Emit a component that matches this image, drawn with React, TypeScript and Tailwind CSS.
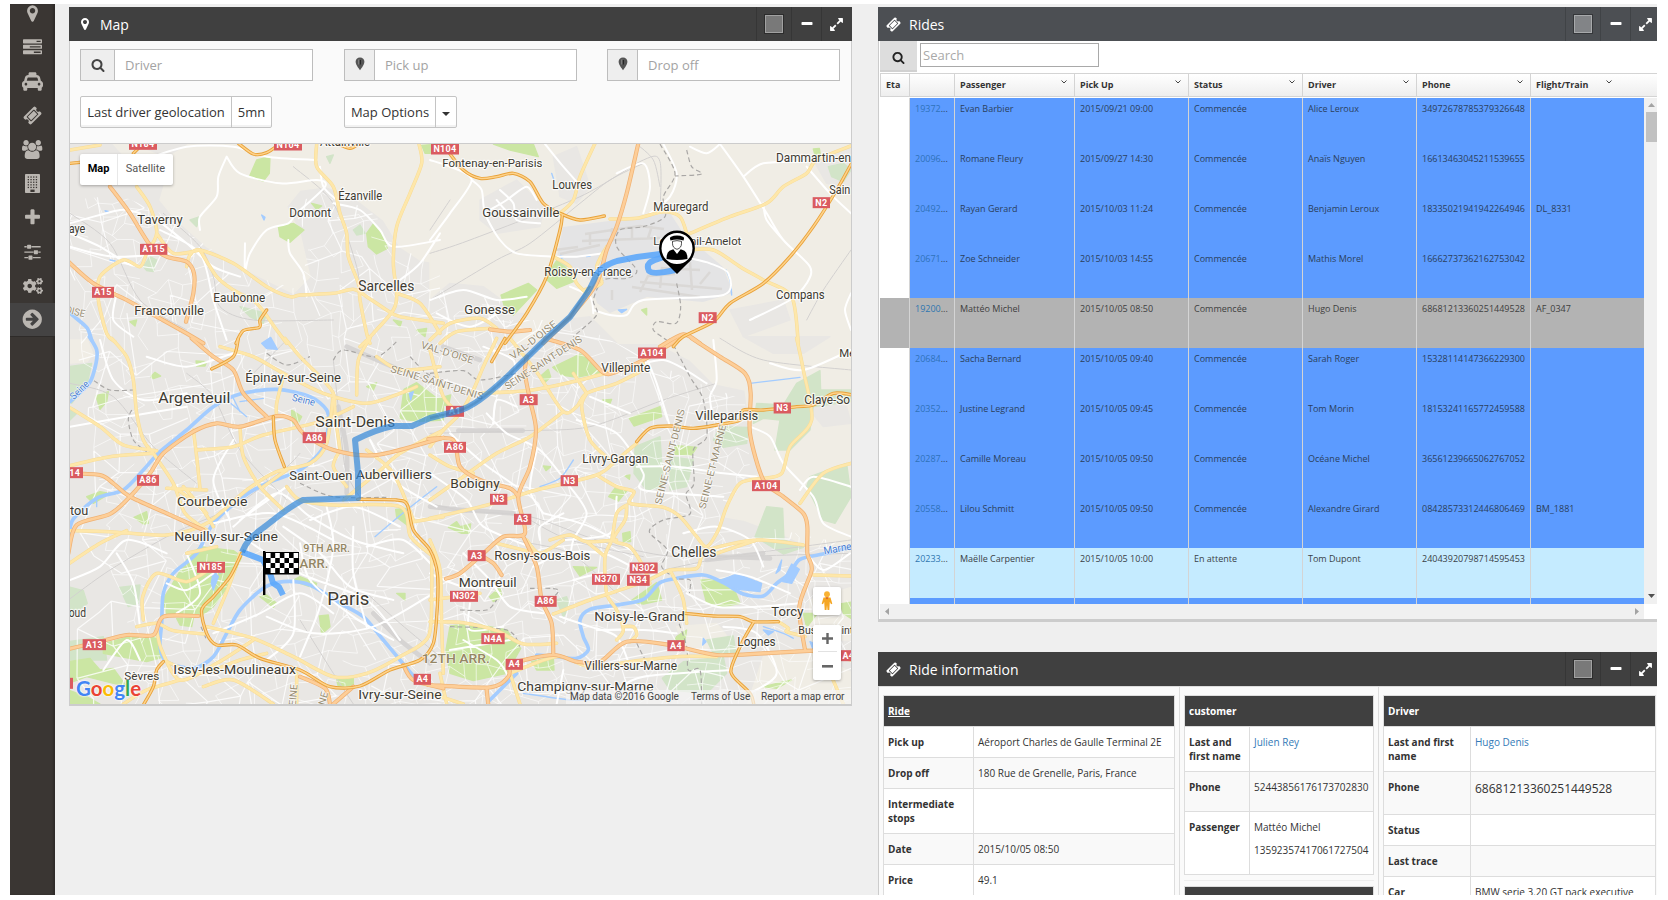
import React from "react";
import { FaTaxi, FaCogs } from "react-icons/fa";

/* ---------- icons ---------- */

const P = {
  marker:
    "M1152 640q0-106-75-181t-181-75-181 75-75 181 75 181 181 75 181-75 75-181zm256 0q0 109-33 179l-364 774q-16 33-47.5 52t-67.5 19-67.5-19-46.5-52l-365-774q-33-70-33-179 0-212 150-362t362-150 362 150 150 362z",
  search:
    "M1216 832q0-185-131.5-316.5t-316.5-131.5-316.5 131.5-131.5 316.5 131.5 316.5 316.5 131.5 316.5-131.5 131.5-316.5zm512 832q0 52-38 90t-90 38q-54 0-90-38l-343-342q-179 124-399 124-143 0-273.5-55.5t-225-150-150-225-55.5-273.5 55.5-273.5 150-225 225-150 273.5-55.5 273.5 55.5 225 150 150 225 55.5 273.5q0 220-124 399l343 343q37 37 37 90z",
  plus: "M1600 736v192q0 40-28 68t-68 28h-416v416q0 40-28 68t-68 28h-192q-40 0-68-28t-28-68v-416h-416q-40 0-68-28t-28-68v-192q0-40 28-68t68-28h416v-416q0-40 28-68t68-28h192q40 0 68 28t28 68v416h416q40 0 68 28t28 68z",
  minus: "M1600 736v192q0 40-28 68t-68 28h-1216q-40 0-68-28t-28-68v-192q0-40 28-68t68-28h1216q40 0 68 28t28 68z",
  ticket:
    "M1024 452l316 316-572 572-316-316zm-211 979l618-618q19-19 19-45t-19-45l-362-362q-18-18-45-18t-45 18l-618 618q-19 19-19 45t19 45l362 362q18 18 45 18t45-18zm889-637l-907 908q-37 37-90.5 37t-90.5-37l-126-126q56-56 56-136t-56-136-136-56-136 56l-125-126q-37-37-37-90.5t37-90.5l907-906q37-37 90.5-37t90.5 37l125 125q-56 56-56 136t56 136 136 56 136-56l126 125q37 37 37 90.5t-37 90.5z",
  arrow:
    "M1413 896q0-27-18-45l-91-91-362-362q-18-18-45-18t-45 18l-91 91q-18 18-18 45t18 45l189 189h-502q-26 0-45 19t-19 45v128q0 26 19 45t45 19h502l-189 189q-19 19-19 45t19 45l91 91q18 18 45 18t45-18l362-362 91-91q18-18 18-45zm251 0q0 209-103 385.5t-279.5 279.5-385.5 103-385.5-103-279.5-279.5-103-385.5 103-385.5 279.5-279.5 385.5-103 385.5 103 279.5 279.5 103 385.5z",
  tasks:
    "M1024 1408h640v-128h-640v128zm-384-512h1024v-128h-1024v128zm640-512h384v-128h-384v128zm512 832v256q0 26-19 45t-45 19h-1664q-26 0-45-19t-19-45v-256q0-26 19-45t45-19h1664q26 0 45 19t19 45zm0-512v256q0 26-19 45t-45 19h-1664q-26 0-45-19t-19-45v-256q0-26 19-45t45-19h1664q26 0 45 19t19 45zm0-512v256q0 26-19 45t-45 19h-1664q-26 0-45-19t-19-45v-256q0-26 19-45t45-19h1664q26 0 45 19t19 45z",
  sliders:
    "M480 1408v128h-352v-128h352zm352-128q26 0 45 19t19 45v256q0 26-19 45t-45 19h-256q-26 0-45-19t-19-45v-256q0-26 19-45t45-19h256zm160-384v128h-864v-128h864zm-640-512v128h-224v-128h224zm1312 1024v128h-736v-128h736zm-960-1152q26 0 45 19t19 45v256q0 26-19 45t-45 19h-256q-26 0-45-19t-19-45v-256q0-26 19-45t45-19h256zm640 512q26 0 45 19t19 45v256q0 26-19 45t-45 19h-256q-26 0-45-19t-19-45v-256q0-26 19-45t45-19h256zm320 128v128h-224v-128h224zm0-512v128h-864v-128h864z",
  expand:
    "M883 1056q0 13-10 23l-332 332 144 144q19 19 19 45t-19 45-45 19h-448q-26 0-45-19t-19-45v-448q0-26 19-45t45-19 45 19l144 144 332-332q10-10 23-10t23 10l114 114q10 10 10 23zm781-864v448q0 26-19 45t-45 19-45-19l-144-144-332 332q-10 10-23 10t-23-10l-114-114q-10-10-10-23t10-23l332-332-144-144q-19-19-19-45t19-45 45-19h448q26 0 45 19t19 45z",
  users:
    "M593 896q-162 5-265 128h-134q-82 0-138-40.5t-56-118.5q0-353 124-353 6 0 43.5 21t97.5 42.5 119 21.5q67 0 133-23-5 37-5 66 0 139 81 256zm1071 637q0 120-73 189.5t-194 69.5h-874q-121 0-194-69.5t-73-189.5q0-53 3.5-103.5t14-109 26.5-108.5 43-97.5 62-81 85.5-53.5 111.5-20q10 0 43 21.5t73 48 107 48 135 21.5 135-21.5 107-48 73-48 43-21.5q61 0 111.5 20t85.5 53.5 62 81 43 97.5 26.5 108.5 14 109 3.5 103.5zm-1024-1277q0 106-75 181t-181 75-181-75-75-181 75-181 181-75 181 75 75 181zm704 384q0 159-112.5 271.5t-271.5 112.5-271.5-112.5-112.5-271.5 112.5-271.5 271.5-112.5 271.5 112.5 112.5 271.5zm576 225q0 78-56 118.5t-138 40.5h-134q-103-123-265-128 81-117 81-256 0-29-5-66 66 23 133 23 59 0 119-21.5t97.5-42.5 43.5-21q124 0 124 353zm-128-609q0 106-75 181t-181 75-181-75-75-181 75-181 181-75 181 75 75 181z",
};

function Icon({ d, size, w = 1792, className = "" }: { d: string; size: number; w?: number; className?: string }) {
  return (
    <svg viewBox={`0 0 ${w} 1792`} height={size} width={(size * w) / 1792} fill="currentColor" className={"shrink-0 " + className}>
      <path d={d} />
    </svg>
  );
}

function Building() {
  const windows: React.ReactNode[] = [];
  for (let r = 0; r < 5; r++)
    for (let c = 0; c < 4; c++)
      windows.push(<rect key={`${r}-${c}`} x={2.7 + c * 2.7} y={2.4 + r * 2.6} width={1.3} height={1.3} fill="#3a3633" />);
  return (
    <svg width="15" height="19" viewBox="0 0 15 19">
      <rect width="15" height="19" rx="0.8" fill="#bab6b1" />
      {windows}
      <rect x="5.400" y="15.6" width="4.200" height="2.4" fill="#3a3633" />
    </svg>
  );
}

const SIDE: React.ReactNode[] = [
  <Icon d={P.marker} size={19} />,
  <Icon d={P.tasks} size={19} />,
  <FaTaxi size={21} />,
  <Icon d={P.ticket} size={19} />,
  <Icon d={P.users} size={19} w={1920} />,
  <Building />,
  <Icon d={P.plus} size={19} />,
  <Icon d={P.sliders} size={19} />,
  <FaCogs size={20} />,
  <Icon d={P.arrow} size={22.5} />,
];

function Sidebar() {
  return (
    <nav className="flex w-[45px] shrink-0 flex-col overflow-hidden bg-[#3a3633] text-[#bab6b1] shadow-[inset_-2px_0_2px_rgba(0,0,0,0.2)]">
      <div className="-mt-[8px] flex flex-col">
        {SIDE.map((icon, i) => (
          <div
            key={i}
            className={
              i === 9
                ? "flex h-[34px] items-center justify-center border-b border-[#2e2b29] bg-[#444343]"
                : "flex h-[34.1px] items-center justify-center"
            }
          >
            {icon}
          </div>
        ))}
      </div>
    </nav>
  );
}

/* ---------- panels ---------- */

function PanelHeader({ title, icon, tone = "bg-[#404040]" }: { title: string; icon: React.ReactNode; tone?: string }) {
  return (
    <header className={"flex h-[34px] shrink-0 items-center text-white " + tone}>
      <div className="flex w-[31px] items-center justify-center">{icon}</div>
      <h2 className="flex-1 text-[14px]">{title}</h2>
      <div className="flex h-full w-[35px] items-center justify-center border-l border-black/15">
        <span className="-mt-px h-[18px] w-[18px] border border-white/30 bg-white/30 outline outline-black/30" />
      </div>
      <div className="flex h-full w-[30px] items-center justify-center border-l border-black/15">
        <Icon d={P.minus} size={14} />
      </div>
      <div className="flex h-full w-[31px] items-center justify-center border-l border-black/15 pr-[2px]">
        <Icon d={P.expand} size={15} />
      </div>
    </header>
  );
}

function PinGlyph() {
  return (
    <svg width="10" height="14" viewBox="0 0 10 14" className="-mt-[3px]">
      <path d="M5 0.5C2.4 0.5.6 2.4.6 4.8.6 8 5 13.2 5 13.2S9.4 8 9.4 4.8C9.4 2.4 7.6.5 5 .5z" fill="#555" />
      <path d="M4.3 3h1.6v4.6H4.3z" fill="#222" />
      <path d="M3.9 2.500v5" stroke="#aaa" strokeWidth=".8" />
    </svg>
  );
}

function Field({ icon, label, cell }: { icon: React.ReactNode; label: string; cell: string }) {
  return (
    <div className="flex h-8 w-[233px] border border-[#bdbdbd] bg-white">
      <div className={"flex items-center justify-center border-r border-[#bdbdbd] bg-[#eeeeee] " + cell}>{icon}</div>
      <span className="pl-[10px] text-[13px] leading-[30px] text-[#a3a3a3]">{label}</span>
    </div>
  );
}

/* ---------- map ---------- */

type Label = [text: string, x0: number, x1: number, base: number, size: number, tone?: string, rot?: number];
type Shield = [text: string, cx: number, cy: number, w: number];
interface Tile {
  dx: number;
  dy: number;
  rural: string[];
  town: string[];
  wood: string[];
  park: string[];
  water: string[];
  river: string[];
  stream: string[];
  rail: string[];
  yard: string[];
  border: string[];
  white: string[];
  yellow: string[];
  mway: string[];
  trunk: string[];
  labels: Label[];
  shields: Shield[];
}

const TILES: Tile[] = [
  {
    dx: 0,
    dy: 0,
    rural: ["340,432 1320,432 1320,790 1260,780 1200,740 1150,660 1060,590 980,560 900,570 860,620 900,700 930,830 880,880 760,820 620,740 520,650 480,600 500,530 420,520"],
    town: ["400,432 560,432 500,470"],
    wood: ["430,800 450,770 470,780 460,815 440,812", "1060,690 1080,675 1095,700 1070,705", "720,920 800,940 790,970 750,950", "980,470 1000,465 990,490", "570,660 600,650 590,680"],
    park: [
      "770,480 810,470 808,520 790,543 748,530",
      "835,680 880,670 912,690 870,727 840,710",
      "1100,700 1120,672 1150,705 1162,745 1130,762 1105,740",
      "1265,436 1320,432 1300,460 1275,460",
      "935,610 965,618 950,628",
      "390,965 410,960 405,978",
      "1180,960 1205,965 1200,980",
      "1250,990 1280,985 1275,1010",
    ],
    water: ["785,645 795,652 792,660", "315,632 325,634 320,638"],
    river: ["205,935 235,960 262,985 275,1020"],
    stream: ["330,780 345,783", "560,798 570,800"],
    rail: ["490,640 600,740 640,830 660,920 760,960 1000,960", "210,640 330,730 420,900 560,990", "880,500 1000,610 1070,800 1080,900"],
    yard: [],
    border: [],
    white: [
      "430,480 560,440 700,440 800,470 950,480",
      "210,670 360,630 420,640",
      "680,470 720,520 840,550 950,540 975,560 890,640 865,670 800,690 750,760 735,810 735,730",
      "865,720 870,760 910,820 920,890",
      "1000,610 1080,630 1140,690 1180,740 1320,720",
      "210,700 300,740 380,790 420,800",
      "210,740 340,770 520,760",
      "460,650 560,730 640,800 720,830",
      "480,690 600,760 640,900 680,1020",
      "1320,700 1260,790 1200,840",
      "600,690 600,650 650,590 655,530 680,470",
      "960,500 970,560 1010,600",
      "350,880 340,960 400,1010",
    ],
    yellow: [
      "410,560 450,620 470,700 440,760 420,800 370,780 300,830 295,900 320,1000 345,1025",
      "950,432 950,500 1000,560 1020,640 1040,700 1045,770 1075,850 1080,900 1100,1000 1110,1030",
      "1257,432 1265,490 1230,580 1190,680 1180,790 1190,880 1180,930 1120,1000 1080,1040",
      "560,800 570,765 600,750 700,790 800,860 870,890 900,885 1000,880 1060,868 1100,890 1160,930 1200,950 1330,970",
      "600,750 650,830 700,870 770,910 830,990 860,1030",
      "470,700 520,760 600,750",
      "1190,880 1260,910 1320,1000",
      "210,450 300,435",
    ],
    mway: ["205,785 280,850 380,900 470,950 560,1000 610,1030", "330,560 390,640 450,735 500,770 560,785 582,820 580,880 558,965"],
    trunk: ["210,490 240,487", "715,430 760,462 800,458 842,430", "400,460 430,430", "1010,430 1050,445 1080,430", "708,1030 730,992 778,982 780,960 800,930"],
    labels: [
      ["Taverny", 412, 548, 671, 38],
      ["aye", 206, 256, 700, 36],
      ["Franconville", 403, 612, 946, 37],
      ["Eaubonne", 640, 796, 906, 36],
      ["Sarcelles", 1075, 1243, 873, 42],
      ["Domont", 868, 993, 651, 36],
      ["Ézanville", 1015, 1147, 600, 36],
      ["Attainville", 960, 1110, 437, 36],
      ["OISE", 196, 256, 945, 30, "#9a8f76", 14],
    ],
    shields: [
      ["N184", 429, 433, 84],
      ["N104", 864, 435, 84],
      ["A115", 461, 748, 82],
      ["A15", 309, 877, 66],
    ],
  },
  {
    dx: 430,
    dy: 0,
    rural: ["0,430 1270,430 1270,1030 0,1030"],
    town: [
      "150,600 260,540 340,620 330,680 200,700 150,660",
      "0,900 60,850 160,860 215,900 225,940 290,940 240,1030 0,1030",
      "370,470 440,440 480,560 440,610 390,590",
      "1150,480 1263,440 1263,560 1190,550",
      "320,1030 400,960 480,950 560,1030",
      "900,930 1060,900 1080,960 940,1010",
    ],
    wood: ["1195,500 1240,490 1263,510 1240,545 1205,530", "380,785 400,780 410,800"],
    park: ["190,432 310,432 325,470 240,450", "345,835 380,782 415,810 430,845 380,865", "213,885 295,850 320,870 250,945 225,925", "1150,447 1168,445 1172,470 1155,465", "635,930 650,925 650,945"],
    water: ["390,768 400,770 395,775", "565,930 590,928 575,938"],
    river: [],
    stream: ["888,810 900,840 905,885", "365,520 372,540", "470,770 480,768"],
    rail: ["640,490 540,540 450,610 300,730 200,780 0,900", "0,760 120,720 450,590 640,480 690,485 690,640", "1263,750 1180,870 1130,960", "620,432 670,480 690,560", "0,690 60,600"],
    yard: [],
    border: ["690,432 735,520 700,590 705,650 640,680 570,690 560,740 620,810 590,835 520,840 490,900 500,945 430,1010", "770,450 785,500 815,522 735,528", "740,850 752,920 738,970 680,965 670,990 710,1020"],
    white: [
      "0,480 60,500 125,540 60,640 0,720",
      "125,540 155,570 165,640 210,720 260,760 370,770",
      "345,432 400,500 440,545",
      "700,432 740,520 720,590 660,640",
      "780,440 830,460 870,432",
      "870,432 940,530 1010,640 1060,720 1140,800 1130,850 1080,900 960,960",
      "940,530 1000,490 1130,485",
      "1130,500 1200,580 1263,640",
      "380,770 440,770 520,760",
      "490,930 540,945 590,945 640,900 880,885 895,820 840,790 780,775",
      "560,520 640,490 660,560 640,640",
      "0,900 100,870 200,900 290,890",
      "20,940 120,980 220,930",
      "420,860 480,890 490,940",
      "1000,610 1010,660 1060,720",
      "1263,880 1245,930 1263,990",
      "200,600 240,640 300,630",
      "210,570 250,610 260,660 330,670",
      "180,630 230,600 290,560 320,600",
    ],
    yellow: [
      "495,430 450,530 430,600 390,640",
      "540,657 620,655 700,635 750,650 770,700",
      "780,700 900,650 1010,610 1060,560 1130,520 1160,480 1270,435",
      "770,750 850,750 930,800 1000,840 1085,890 1105,1030",
      "370,770 420,800 440,850 475,885",
      "530,740 500,800 515,850 460,870",
      "0,1020 60,970 150,955 200,985",
      "30,1030 80,995 180,985",
    ],
    mway: ["625,430 590,580 560,680 530,750 500,850 430,940 340,1030", "180,988 240,995 300,990", "690,1040 760,1003 810,1030"],
    trunk: [
      "55,455 100,510 150,535 200,530 250,520 300,545 340,610 390,640 450,660 523,648",
      "397,645 390,690 350,830 290,940 225,1030",
      "1270,480 1220,570 1150,680 1080,770 1000,850 900,910 850,965 760,1010 730,1040",
    ],
    labels: [
      ["Fontenay-en-Parisis", 37, 337, 500, 35],
      ["Louvres", 367, 486, 566, 36],
      ["Goussainville", 157, 388, 651, 39],
      ["Mauregard", 670, 835, 633, 36],
      ["Le Mesnil-Amelot", 670, 934, 735, 35],
      ["Roissy-en-France", 343, 604, 828, 36],
      ["Gonesse", 103, 255, 942, 39],
      ["Compans", 1038, 1184, 896, 36],
      ["Dammartin-en", 1038, 1263, 486, 36],
      ["Sain", 1198, 1261, 581, 36],
    ],
    shields: [
      ["N104", 45, 447, 84],
      ["N2", 1174, 608, 52],
      ["N2", 833, 953, 54],
    ],
  },
  {
    dx: 0,
    dy: 340,
    rural: ["205,0 262,0 278,40 262,65 205,70"],
    town: [],
    wood: ["205,80 275,70 262,130 215,190", "205,740 250,752 262,790 205,830", "358,742 420,735 415,790 385,800", "205,905 310,890 320,960 205,960", "205,210 235,215 210,240"],
    park: [
      "600,620 700,632 725,650 690,730 640,800 600,830 500,822 488,780 560,660",
      "310,912 380,892 470,890 495,950 440,965 310,940",
      "205,965 270,955 300,990 340,985 380,1040 260,1010 205,1030",
      "1212,148 1250,128 1330,190 1330,240 1250,245 1200,235",
      "958,828 985,825 990,860 965,882",
      "1187,508 1218,505 1228,560 1190,532",
      "288,168 325,155 320,185 300,208",
      "588,63 620,65 615,78 590,78",
      "402,532 440,515 445,550 430,552",
      "452,110 465,97 482,108 460,116",
      "880,720 900,710 950,730 945,745 900,730",
      "780,770 800,765 830,790 820,802",
      "1100,140 1130,128 1120,150",
      "875,210 905,230 890,258 875,245",
      "530,835 580,835 575,860 540,855",
      "260,470 300,455 330,460 280,490",
      "1010,1020 1060,1015 1060,1035 1015,1040",
      "1190,760 1215,760 1215,780",
      "205,1050 260,1070 300,1092 205,1092",
    ],
    water: ["785,10 812,-8 832,28 800,26", "640,690 655,710 640,750 634,730", "1228,160 1240,155 1232,180"],
    river: [
      "268,-10 290,30 288,70 268,130 210,185",
      "208,600 218,540 290,475 370,450 430,390 480,335 560,270 640,200 720,162 830,148 930,170 980,210 985,260 965,330 900,390 800,430 730,470 640,550 590,640 520,700 490,760 485,850 480,920 500,965 580,985 640,950 680,880 720,810 790,745 850,725 930,735 1020,790 1090,830 1150,900 1200,960 1250,1020",
    ],
    stream: ["680,180 740,230", "700,175 720,215", "720,185 790,175", "1125,590 1220,510 1310,440", "640,680 660,700", "290,480 290,500"],
    rail: ["1000,60 1020,250 1040,400 1100,500", "205,780 330,690 520,580 700,500 850,390 900,340", "210,130 340,170 460,320 590,430", "760,100 860,0", "1100,760 1200,850 1320,950", "560,100 640,170 720,330 860,480", "900,840 1000,1000 1060,1092"],
    yard: ["1015,200 1040,330 1040,460", "1120,820 1200,900 1290,970", "1040,20 1200,90"],
    border: ["282,122 330,150 400,150", "395,210 385,240 400,300 440,335", "1000,60 1030,30 1130,50 1195,0", "800,40 860,75 930,50", "1230,50 1280,100 1330,120", "603,860 620,900", "900,430 1000,470 1160,472"],
    white: [
      "440,50 560,80 700,40",
      "300,0 340,120 430,180 560,160",
      "210,260 380,230 560,200",
      "640,550 820,520 1000,600",
      "740,600 900,700 1100,780 1200,900",
      "850,560 960,640 1050,740 1180,780",
      "980,500 1000,620 960,800 900,950",
      "720,540 860,440",
      "700,560 830,460 930,530 1060,600 1210,640",
      "800,830 940,880 1120,860 1300,760",
      "880,720 880,880 800,960",
      "1060,560 1060,700 1100,860",
      "640,880 780,820 900,760 1000,820",
      "210,720 300,680 380,600 500,640",
      "350,640 400,730 420,860",
      "560,640 600,760 530,820",
      "1110,300 1180,420 1310,500",
      "930,540 1060,500 1200,560",
      "1100,620 1210,600 1310,690",
      "700,300 640,420 690,540",
      "900,610 930,720 1060,830 1180,900",
      "500,730 560,750 640,700",
      "310,990 380,900 420,960",
    ],
    yellow: [
      "335,-5 380,50 400,120 410,220 430,300 460,340",
      "205,200 300,260 370,315 470,332",
      "205,378 330,350 460,340",
      "460,340 520,430 555,520 620,570",
      "660,20 760,50 850,100 970,160 1100,190 1200,160 1250,140",
      "850,110 830,190 830,230",
      "855,-5 900,50 960,110 1000,160 1005,220 1020,330",
      "1110,-5 1075,60 1070,165",
      "720,260 730,350 780,440 850,510",
      "580,270 590,350 600,445",
      "590,330 700,320 790,285 960,245 1060,200",
      "205,572 330,575 500,585 620,550 740,450 830,395 930,370 980,310 1000,160",
      "500,445 620,450",
      "205,672 300,610 380,572",
      "430,840 428,770 470,700 560,725 640,680",
      "410,860 470,850 520,872 612,882",
      "470,870 485,930 540,1020 650,970 760,900",
      "500,965 600,1000 720,960 800,940",
      "860,440 900,480 1000,495 1200,500 1232,590 1300,650",
      "1330,270 1200,340 1130,400 1030,480",
      "1020,330 1000,380 1040,440",
      "620,860 760,895 880,950 1000,1010 1100,1000 1200,950 1285,890 1295,760 1295,650",
      "720,640 690,730 640,850",
      "1100,330 1180,400 1240,540",
      "1330,530 1240,545",
      "610,1040 700,1020 820,1092",
      "650,620 560,640",
      "520,440 600,500 640,560",
      "550,440 620,520",
      "860,390 790,440",
      "370,1092 440,1050 540,1020",
      "890,1000 890,1092",
      "1130,50 1200,90 1320,80",
    ],
    mway: [
      "575,-5 640,50 700,90 730,160 800,230",
      "205,640 230,555 330,522 390,470 450,400 490,340 580,275 650,250 720,260 830,228 880,240 910,280 1000,330 1130,345 1330,293",
      "205,400 300,405 340,430 390,470 500,520 610,570",
      "205,927 300,905 380,885 460,885 490,830 595,828",
      "1210,975 1240,1020 1330,1045",
      "1060,1040 1000,1092",
      "990,1092 975,1045 900,1010",
    ],
    trunk: [
      "725,640 690,710 640,770 605,810 620,880 650,915 710,915 780,955 900,990 990,1040 1080,1038 1170,990 1260,960 1300,910 1312,800 1312,700 1290,630 1240,570 1222,495 1190,480 1073,478",
      "635,87 700,50 715,-5",
      "820,230 825,300 853,380",
      "430,1095 460,1040 470,990 490,965",
    ],
    labels: [
      ["Argenteuil", 475, 691, 188, 44],
      ["Épinay-sur-Seine", 736, 1023, 126, 37],
      ["Saint-Denis", 946, 1186, 262, 44],
      ["Saint-Ouen", 868, 1057, 420, 37],
      ["Aubervilliers", 1067, 1296, 418, 39],
      ["Courbevoie", 531, 742, 497, 39],
      ["Neuilly-sur-Seine", 523, 834, 602, 39],
      ["tou", 210, 265, 524, 37],
      ["9TH ARR.", 910, 1050, 636, 33, "#948664"],
      ["8TH ARR.", 815, 985, 684, 36, "#948664"],
      ["Paris", 982, 1108, 794, 56],
      ["Sèvres", 373, 478, 1020, 35],
      ["Issy-les-Moulineaux", 520, 888, 1001, 39],
      ["oud", 206, 258, 832, 37],
      ["Ivry-sur-Seine", 1075, 1325, 1077, 39],
      ["Seine", 205, 272, 160, 30, "#4a7fd0", -44],
      ["Seine", 876, 946, 190, 30, "#4a7fd0", 14],
      ["VAL-D'OISE", 1260, 1424, 48, 30, "#9a8f76", 17],
      ["SEINE-SAINT-DENIS", 1166, 1456, 138, 30, "#9a8f76", 17],
      ["EINE", 848, 912, 1075, 30, "#9a8f76", -85],
      ["NE", 950, 990, 1085, 30, "#9a8f76", -75],
      ["12TH ARR.", 1265, 1470, 968, 39, "#948664"],
    ],
    shields: [
      ["A86", 943, 293, 70],
      ["A86", 444, 421, 66],
      ["N185", 633, 682, 84],
      ["A13", 283, 914, 70],
      ["A4", 1267, 1018, 52],
      ["A14", 215, 398, 68],
      ["", 205, 1030, 28],
    ],
  },
  {
    dx: 430,
    dy: 340,
    rural: [
      "640,-10 1270,-10 1270,610 1140,620 1050,580 940,540 880,530 930,430 990,400 960,260 945,150 850,130 780,60",
      "1000,950 1150,940 1270,1000 1270,1100 950,1100",
      "1140,780 1270,740 1270,900 1140,900",
      "740,860 860,850 900,900 820,930 760,920",
    ],
    town: ["940,-10 1030,40 1120,40 1200,-10", "1130,200 1190,190 1250,200 1263,250 1180,260"],
    wood: [
      "1100,130 1170,92 1172,150 1263,150 1263,185 1150,200 1140,270 1080,330 1035,330 1050,240 1000,235 970,250 980,190 1060,195",
      "1140,410 1250,370 1263,470 1215,550 1180,540 1130,440",
      "975,590 1010,500 1058,505 1062,600 1120,622 1060,642",
      "615,320 690,290 700,440 650,450 612,400",
      "720,350 790,360 770,440 720,450",
      "697,1015 760,965 880,950 890,1000 830,1060 720,1050",
      "830,900 910,888 918,940 850,940",
      "870,260 955,262 950,310 880,322 850,300",
      "380,780 410,770 420,800 400,830",
    ],
    park: [
      "368,82 450,42 480,60 510,98 440,112 395,105",
      "328,112 355,88 362,110 340,132",
      "598,235 690,200 695,230 612,258",
      "735,316 800,322 785,345 735,343",
      "536,470 560,438 592,450 565,483",
      "600,785 680,728 695,780 640,792",
      "812,720 900,718 930,790 870,802 830,790",
      "60,858 130,850 230,870 272,925 230,1000 130,1022 60,1000 48,930",
      "55,562 80,545 90,560 122,552 118,580 95,580",
      "430,680 500,682 450,708",
      "178,770 210,742 215,770 190,785",
      "25,175 62,165 55,200 35,192",
      "1120,820 1162,820 1130,862",
      "305,965 370,950 372,990 320,990",
      "740,890 770,870 760,930 730,910",
      "578,580 600,575 602,605 580,605",
      "1230,792 1270,785 1270,840 1240,820",
      "585,408 600,405 598,418",
      "518,180 545,178 540,190",
      "340,378 362,380 348,392",
      "1000,1040 1085,1020 1040,1045",
    ],
    water: ["868,722 920,702 995,730 990,755 925,748", "1058,725 1085,672 1108,688 1085,730", "1038,700 1055,660 1050,690", "1000,870 1030,875 1015,885", "820,895 828,905 818,915", "1140,905 1160,915 1150,930"],
    river: ["1270,618 1190,640 1110,658 1080,700 1040,730 1000,768 940,762 880,728 820,705 740,715 690,728 640,778 560,795 480,808 450,840 460,890 475,930 440,955 380,950 320,945", "180,1080 240,1020 260,1000"],
    stream: ["960,130 1110,112", "330,440 390,415 430,360", "1000,860 1060,880 1090,895", "280,1060 420,1080 500,1080"],
    rail: ["0,490 100,512 300,530 500,600 690,645 860,650 1263,640", "0,280 280,272 480,260 700,180 860,130", "870,-5 1000,60 1263,90", "300,540 420,600 640,650", "240,600 420,640 560,760", "700,690 900,650 1263,600"],
    yard: ["85,272 278,272", "0,500 110,512", "100,510 250,520", "860,650 1020,655", "830,660 1000,640", "40,20 150,60"],
    border: [
      "720,-5 780,110 820,180 830,290 790,330 792,430 768,462 780,522 700,540 658,575 712,630 695,680 740,715 780,720 778,760",
      "740,830 770,920 775,990 810,990 815,1092",
      "0,100 100,92 150,120 260,100",
      "300,745 385,750 340,800",
      "90,810 170,810 200,780",
      "620,910 660,980 700,980",
      "60,860 230,870 270,920",
    ],
    white: [
      "640,30 680,130 720,260",
      "850,0 860,120 840,170 850,240",
      "960,260 1020,290 1060,370 1150,470 1180,550 1263,590",
      "170,220 230,280 330,330 420,440",
      "320,330 300,450 340,520",
      "440,240 560,280 640,400 640,450 880,470",
      "480,170 600,220",
      "60,280 160,370 260,440",
      "0,400 110,480 160,560 300,620",
      "340,520 480,560 620,640",
      "420,440 470,520 430,600 420,660",
      "620,380 740,380 880,400 980,410",
      "760,580 860,560 960,600 1000,680",
      "860,690 960,710 1080,760",
      "100,640 180,720 240,800 340,820",
      "0,700 100,740 220,740",
      "120,790 120,870 220,860",
      "390,830 480,860 560,890 600,980",
      "500,870 640,870 740,880",
      "770,760 860,800 980,800 1110,790",
      "880,860 980,880 1040,1000 960,1060",
      "1130,640 1180,690 1260,640",
      "310,680 400,640 520,640 640,700",
      "330,600 330,560 400,520",
      "430,720 520,700 560,720",
      "100,900 200,960 230,1000",
      "60,930 240,900",
      "560,100 700,60 830,130",
      "1020,70 1120,90 1263,30",
      "1110,450 1150,410 1263,440",
      "190,250 200,180 260,200",
      "250,120 250,60 160,20",
      "400,600 540,580 560,470",
      "400,990 380,1092",
      "560,1050 640,1010 900,990",
    ],
    yellow: [
      "0,320 40,270 90,220 130,150 160,80 200,-5",
      "150,160 250,155 320,148 450,120 640,70",
      "240,-5 300,70 330,110 400,215 440,200 470,160 560,130 640,90",
      "430,100 470,160",
      "400,215 300,290 200,340 100,410 0,480",
      "0,535 110,510 190,490 270,465 320,450 500,405 560,360 620,310",
      "470,160 455,200 480,300 540,360",
      "500,405 560,440 612,455 600,490 700,502 750,530 800,590 830,620 865,570 890,500 930,430 1000,415",
      "590,495 560,520 545,600 525,650 530,760 560,810 580,870 560,900",
      "590,500 585,540 550,600 600,620 640,680 660,730",
      "360,600 420,585 470,605 560,600",
      "290,600 330,640 400,600",
      "370,822 480,780 600,740 660,718 720,690 800,685 830,632 980,600 1120,615",
      "470,605 525,650",
      "860,640 980,600",
      "720,690 740,730 760,780 770,850",
      "1100,-5 1120,90 1145,240 1080,320 1055,400 1000,415",
      "1110,490 1180,400 1270,368",
      "0,845 100,848 200,872 280,912 380,910",
      "240,1000 380,950 480,980 600,965 740,950 860,950",
      "1150,705 1270,708",
      "1045,845 1075,865 1070,875 1125,890",
      "1205,1010 1240,1092",
      "0,345 60,380 130,400",
      "0,30 40,170 90,220",
      "30,1000 50,1092",
      "0,600 30,690 35,860 40,1000",
      "240,1000 270,1092",
      "200,610 320,640",
      "0,1060 100,1092",
      "1130,930 1263,960",
      "580,860 610,860 620,885 600,905",
      "0,780 150,760",
    ],
    mway: [
      "290,50 285,100 300,180 318,270 300,380 265,470 285,580 220,590 160,640 90,700 48,716",
      "150,645 190,670 215,705",
      "280,590 320,680 335,780 365,850 370,945",
      "-5,297 70,300 90,380 150,420 240,445 265,470",
      "345,-5 450,30 520,98 560,95 640,60 750,-5",
      "785,-5 870,50 945,100 962,160 960,280 1000,420 1060,470 1120,520 1132,560 1132,640 1145,690 1108,800 1125,930",
      "-5,1035 180,1042 235,1010 250,970 370,945 440,965 510,965 590,905 720,915 860,945 1000,940 1150,932",
      "170,1050 175,1095",
    ],
    trunk: [
      "620,305 660,265 720,258 790,265 860,255 930,240 940,210 1000,210 1100,200 1150,195 1210,160 1270,165",
      "765,820 850,828 930,830 970,845 1045,845",
      "970,848 940,900 905,980 910,1010 960,1060 972,1095",
      "185,65 225,-5",
    ],
    labels: [
      ["Villepinte", 514, 661, 96, 37],
      ["Villeparisis", 796, 985, 239, 39],
      ["Livry-Gargan", 457, 655, 370, 37],
      ["Bobigny", 61, 209, 444, 41],
      ["Rosny-sous-Bois", 193, 481, 660, 39],
      ["Montreuil", 86, 260, 740, 41],
      ["Chelles", 724, 859, 650, 42],
      ["Noisy-le-Grand", 493, 765, 842, 41],
      ["Torcy", 1024, 1120, 827, 38],
      ["Lognes", 922, 1037, 918, 36],
      ["Bussy-Saint", 1105, 1270, 881, 35],
      ["Villiers-sur-Marne", 463, 741, 990, 36],
      ["Champigny-sur-Marne", 262, 671, 1053, 41],
      ["Claye-So", 1123, 1260, 192, 36],
      ["Me", 1228, 1276, 51, 35],
      ["VAL-D'OISE", 225, 395, 10, 30, "#9a8f76", -38],
      ["SEINE-SAINT-DENIS", 205, 475, 78, 30, "#9a8f76", -33],
      ["SEINE-SAINT-DENIS", 573, 867, 360, 29, "#9a8f76", -76],
      ["SEINE-ET-MARNE", 718, 978, 390, 29, "#9a8f76", -76],
      ["Marne", 1180, 1265, 636, 32, "#4a7fd0", -10],
    ],
    shields: [
      ["A104", 666, 39, 84],
      ["A3", 296, 179, 54],
      ["A1", 75, 214, 54],
      ["A86", 75, 322, 66],
      ["N3", 1057, 204, 52],
      ["N3", 418, 422, 52],
      ["N3", 206, 478, 52],
      ["A3", 278, 538, 52],
      ["A104", 1008, 437, 84],
      ["A3", 140, 647, 54],
      ["N302", 641, 684, 84],
      ["N370", 528, 718, 84],
      ["N34", 625, 721, 68],
      ["N302", 102, 769, 84],
      ["A86", 347, 784, 66],
      ["N4A", 189, 896, 70],
      ["A4", 738, 917, 52],
      ["A4", 253, 973, 52],
      ["A4", 1255, 947, 52],
    ],
  },
];

/* Catmull-Rom curve through a "x,y x,y" list. */
function curve(points: string) {
  const p = points.split(" ").map((s) => s.split(",").map(Number));
  let d = `M${p[0][0]} ${p[0][1]}`;
  for (let i = 0; i < p.length - 1; i++) {
    const a = p[i - 1] ?? p[i];
    const b = p[i];
    const c = p[i + 1];
    const e = p[i + 2] ?? c;
    const f = (n: number) => n.toFixed(1);
    d += `C${f(b[0] + (c[0] - a[0]) / 7)} ${f(b[1] + (c[1] - a[1]) / 7)} ${f(c[0] - (e[0] - b[0]) / 7)} ${f(c[1] - (e[1] - b[1]) / 7)} ${c[0]} ${c[1]}`;
  }
  return d;
}

/* Minor street mesh: jittered lattice with missing links. */
function streets(step: number, seed: number, keep: number) {
  let s = seed;
  const rnd = () => {
    s = (s * 1103515245 + 12345) % 2147483648;
    return s / 2147483648;
  };
  const cols = Math.ceil(800 / step) + 2;
  const rows = Math.ceil(580 / step) + 2;
  const pt: [number, number][][] = [];
  for (let r = 0; r < rows; r++) {
    pt.push([]);
    for (let c = 0; c < cols; c++)
      pt[r].push([60 + c * step + (rnd() - 0.5) * step * 0.95 + r * 2, 138 + r * step + (rnd() - 0.5) * step * 0.95 - c * 1.2 + 20]);
  }
  let d = "";
  for (let r = 0; r < rows; r++)
    for (let c = 0; c < cols; c++) {
      const [x, y] = pt[r][c];
      if (c + 1 < cols && rnd() < keep) d += `M${x.toFixed(1)} ${y.toFixed(1)}L${pt[r][c + 1][0].toFixed(1)} ${pt[r][c + 1][1].toFixed(1)}`;
      if (r + 1 < rows && rnd() < keep) d += `M${x.toFixed(1)} ${y.toFixed(1)}L${pt[r + 1][c][0].toFixed(1)} ${pt[r + 1][c][1].toFixed(1)}`;
    }
  return d;
}

type LineKey = "river" | "stream" | "rail" | "yard" | "border" | "white" | "yellow" | "mway" | "trunk";
type AreaKey = "rural" | "town" | "wood" | "park" | "water";

const tf = (t: Tile) => `translate(${t.dx} ${t.dy}) scale(.33333)`;

function Lines({ k, stroke, width, dash, opacity }: { k: LineKey; stroke: string; width: number; dash?: string; opacity?: number }) {
  return (
    <g fill="none" stroke={stroke} strokeWidth={width} strokeDasharray={dash} opacity={opacity} strokeLinejoin="round" strokeLinecap={dash ? "butt" : "round"}>
      {TILES.map((t, i) => (
        <path key={i} transform={tf(t)} d={t[k].map(curve).join("")} />
      ))}
    </g>
  );
}

function Areas({ k, fill }: { k: AreaKey; fill: string }) {
  return (
    <g fill={fill} stroke={fill} strokeWidth="4" strokeLinejoin="round">
      {TILES.map((t, i) => (
        <g key={i} transform={tf(t)}>
          {t[k].map((p, j) => (
            <polygon key={j} points={p} />
          ))}
        </g>
      ))}
    </g>
  );
}

const ROUTE_START = "M675 270C662 273 652 274 649 271C645 263 652 261 658 259L672 254";
const ROUTE_TOP = "M668 253L637 257L617 261C608 264 601 267 597 274";
const ROUTE = "M597 273C594 281 590 290 583 299L570 317L547 338L507 377C485 397 472 407 458 411L430 418L412 426H393C378 429 365 435 355 440L358 473V498L303 500C290 506 280 515 263 528C250 537 246 543 242 552";
const ROUTE_END = "M242 552L263 560L270 573L273 583L279 587L283 595";

function DriverPin() {
  return (
    <g>
      <path d="M662 259L677 274L692 259z" />
      <circle cx="677" cy="248.5" r="16.7" fill="#fff" stroke="#000" strokeWidth="2.4" />
      <path d="M670.5 240.500q-1.200-2.600 0-3.500q6.500-2.800 13 0q1.200.9 0 3.500q-6.500-2-13 0z" />
      <path d="M672.500 241.300q4.500-1.300 9 0v2q0 4.800-4.500 6q-4.500-1.200-4.500-6z" fill="#fff" stroke="#000" strokeWidth=".7" />
      <path d="M666.500 259q0-6.500 3-8.200l3.800-1.500l3.700 4.700l3.700-4.700l3.800 1.500q3 1.700 3 8.200q-10.500 2-21 0z" />
    </g>
  );
}

function Flag() {
  const cells: React.ReactNode[] = [];
  for (let r = 0; r < 4; r++)
    for (let c = 0; c < 7; c++)
      if ((r + c) % 2 === 0) cells.push(<rect key={`${r}${c}`} x={266 + c * 4.6} y={553 + r * 5} width={4.6} height={5} fill="#fff" />);
  return (
    <g>
      <rect x="263" y="551" width="2.4" height="44" />
      <rect x="264" y="552" width="35" height="22.500" />
      {cells}
    </g>
  );
}

function MapCanvas() {
  return (
    <svg width="781" height="560" viewBox="70 144 781 560" className="block" fontFamily="Roboto, sans-serif">
      <rect x="70" y="144" width="781" height="560" fill="#e9e7e4" />
      <Areas k="rural" fill="#f0ede5" />
      <Areas k="town" fill="#e9e7e4" />
      <polygon points="563,227 670,213 683,233 723,267 733,293 703,302 647,297 610,313 597,303 590,280 557,257" fill="#e4e4e5" />
      <Areas k="wood" fill="#d2e4c8" />
      <Areas k="park" fill="#cbe6a3" />
      <g fill="none" stroke="#dad8d6" strokeWidth="2.500">
        <path d="M585 234L640 226L664 229M582 241L660 238M590 245V234M612 242V228M555 250L578 247M560 254L600 245M632 240V226M648 238L652 226" />
        <path d="M632 287L700 297M640 282L722 289M660 288L662 268L700 270M690 262L692 290M640 292L648 276L675 274M612 290V300M700 284L710 272" />
      </g>
      <path d={streets(15, 7, 0.62)} stroke="#fff" strokeWidth=".8" fill="none" opacity=".75" clipPath="url(#built)" />
      <path d={streets(34, 91, 0.7)} stroke="#fff" strokeWidth="1.200" fill="none" opacity=".8" clipPath="url(#built)" />
      <defs>
        <clipPath id="built">
          <path d="M70 200L120 195L165 215L205 245L250 275L300 290L310 240L290 205L330 190L375 215L400 250L440 262L440 290L500 300L500 320L570 320L620 345L690 380L745 400L750 470L720 520L780 530L851 545V704H70z" />
        </clipPath>
      </defs>
      <Lines k="yard" stroke="#d6d4d3" width={14} />
      <Lines k="rail" stroke="#d3d1d0" width={3} />
      <Lines k="river" stroke="#a3ccff" width={11} />
      <Lines k="stream" stroke="#a3ccff" width={4} />
      <Areas k="water" fill="#a3ccff" />
      <Lines k="white" stroke="#ffffff" width={6} />
      <Lines k="border" stroke="#a9a7a5" width={3.500} dash="14 9" />
      <Lines k="yellow" stroke="#f7dc98" width={10.500} />
      <Lines k="yellow" stroke="#fee7aa" width={7.500} />
      <Lines k="mway" stroke="#f0b274" width={12.500} />
      <Lines k="mway" stroke="#fdce98" width={8} />
      <Lines k="trunk" stroke="#e8a23a" width={10} />
      <Lines k="trunk" stroke="#fed28a" width={4.500} />
      {TILES.map((t, i) => (
        <g key={i} transform={tf(t)}>
          {t.shields.map(([text, cx, cy, w], j) => (
            <g key={j}>
              <rect x={cx - w / 2} y={cy - 16.500} width={w} height={33} fill="#da5b60" />
              <text x={cx} y={cy + 9.500} textAnchor="middle" fontSize="27" fontWeight="700" fill="#fff" letterSpacing="1">
                {text}
              </text>
            </g>
          ))}
          {t.labels.map(([text, x0, x1, base, size, tone, rot], j) => (
            <text
              key={j}
              x={x0}
              y={base}
              fontSize={size}
              textLength={x1 - x0}
              lengthAdjust="spacingAndGlyphs"
              fill={tone ?? "#403b32"}
              fontWeight={tone && !rot ? 500 : 400}
              stroke="#ffffff"
              strokeWidth={tone ? 4 : 7}
              strokeOpacity={0.75}
              paintOrder="stroke"
              strokeLinejoin="round"
              transform={rot ? `rotate(${rot} ${(x0 + x1) / 2} ${base - size / 3})` : undefined}
            >
              {text}
            </text>
          ))}
        </g>
      ))}
      <g fill="none" strokeLinejoin="round" strokeWidth="6">
        <path d={ROUTE_START} stroke="#56a5fb" opacity=".85" />
        <path d={ROUTE_TOP} stroke="#56a5fb" opacity=".85" />
        <path d={ROUTE_END} stroke="#56a5fb" opacity=".85" />
        <path d={ROUTE} stroke="#3288d8" opacity=".7" />
        <path d="M590 286L570 317L547 338L507 377C485 397 472 407 458 411L430 418" stroke="#2b6ca6" strokeWidth="2.500" opacity=".3" />
      </g>
      <Flag />
      <DriverPin />
    </svg>
  );
}

function MapPanel() {
  return (
    <section className="flex w-[783px] flex-col">
      <PanelHeader title="Map" icon={<Icon d={P.marker} size={14} />} />
      <div className="flex flex-col border-x border-b-2 border-[#cccccc] bg-[#fafafa]">
        <div className="flex h-[103px] flex-col border-b border-[#cccccc] pt-2 pl-[10px]">
          <div className="flex">
            <Field label="Driver" cell="w-[34px]" icon={<Icon d={P.search} size={14} className="text-[#444]" />} />
            <div className="ml-[31px]">
              <Field label="Pick up" cell="w-[30px]" icon={<PinGlyph />} />
            </div>
            <div className="ml-[30px]">
              <Field label="Drop off" cell="w-[30px]" icon={<PinGlyph />} />
            </div>
          </div>
          <div className="mt-[15px] flex text-[13px] leading-[30px] text-[#333]">
            <div className="flex h-8 w-[192px] rounded-[2px] border border-[#c4c4c4] bg-white shadow-[inset_0_-2px_0_rgba(0,0,0,0.05)]">
              <span className="w-[151px] border-r border-[#c4c4c4] text-center whitespace-nowrap">Last driver geolocation</span>
              <span className="flex-1 text-center">5mn</span>
            </div>
            <div className="ml-[72px] flex h-8 w-[113px] rounded-[2px] border border-[#c4c4c4] bg-white shadow-[inset_0_-2px_0_rgba(0,0,0,0.05)]">
              <span className="w-[91px] border-r border-[#c4c4c4] text-center whitespace-nowrap">Map Options</span>
              <span className="flex flex-1 items-center justify-center pt-[3px]">
                <svg width="8" height="4" viewBox="0 0 8 4">
                  <path d="M0 0h8L4 4z" fill="#333" />
                </svg>
              </span>
            </div>
          </div>
        </div>
        <div className="relative h-[560px] overflow-hidden font-['Roboto',sans-serif]">
          <MapCanvas />
          <div className="absolute top-[10px] left-[10px] flex h-[31px] w-[93px] items-center rounded-[2px] bg-white text-[11px] shadow-[0_1px_3px_rgba(0,0,0,0.3)]">
            <span className="flex h-full w-[38px] items-center justify-center border-r border-[#e8e8e8] font-bold text-black">Map</span>
            <span className="flex-1 text-center text-[#565656]">Satellite</span>
          </div>
          <div className="absolute bottom-[4px] left-[6px] font-['Lato',sans-serif] text-[20.5px] leading-[24px] font-bold [text-shadow:0_0_2px_#fff,0_0_2px_#fff]">
            <span className="text-[#4285f4]">G</span>
            <span className="text-[#ea4335]">o</span>
            <span className="text-[#fbbc05]">o</span>
            <span className="text-[#4285f4]">g</span>
            <span className="text-[#34a853]">l</span>
            <span className="text-[#ea4335]">e</span>
          </div>
          <div className="absolute right-[10px] bottom-[89px] flex h-7 w-7 items-center justify-center rounded-[2px] bg-white shadow-[0_1px_3px_rgba(0,0,0,0.3)]">
            <svg width="12" height="20" viewBox="0 0 12 20">
              <circle cx="6" cy="3.200" r="2.900" fill="#f9b233" />
              <path d="M2.500 6.500h7l1.800 6.200-1.300.6-1.200-2.500-.5 8.200H6.500L6 14l-.5 5H3.700l-.5-8.200L2 13.300l-1.300-.6z" fill="#f5a623" />
              <path d="M4.300 6.300L6 8.500l1.700-2.200z" fill="#d95f1e" />
            </svg>
          </div>
          <div className="absolute right-[10px] bottom-[24px] flex h-[55px] w-7 flex-col items-center rounded-[2px] bg-white shadow-[0_1px_3px_rgba(0,0,0,0.3)]">
            <span className="flex h-[27px] w-[19px] items-center justify-center border-b border-[#e2e2e2]">
              <svg width="11" height="11" viewBox="0 0 11 11">
                <path d="M4.300 0h2.400v4.300H11v2.400H6.700V11H4.300V6.700H0V4.300h4.300z" fill="#666" />
              </svg>
            </span>
            <span className="flex flex-1 items-center">
              <svg width="11" height="3" viewBox="0 0 11 3">
                <path d="M0 0h11v2.600H0z" fill="#666" />
              </svg>
            </span>
          </div>
          <div className="absolute right-0 bottom-0 flex h-[14px] items-center bg-[#f5f5f5]/70 pb-px text-[10px] whitespace-nowrap text-[#444]">
            <span className="w-[121px] pl-[4px]">Map data ©2016 Google</span>
            <span className="w-[71px] pl-[4px]">Terms of Use</span>
            <span className="w-[93px] pl-[3px]">Report a map error</span>
          </div>
        </div>
      </div>
    </section>
  );
}

/* ---------- rides ---------- */

const COLS = ["w-[30px]", "w-[45px]", "w-[120px]", "w-[114px]", "w-[114px]", "w-[114px]", "w-[114px]", "w-[113px]"];
const HEADS = ["Eta", "", "Passenger", "Pick Up", "Status", "Driver", "Phone", "Flight/Train"];

const RIDES: [string, string, string, string, string, string, string][] = [
  ["19372", "Evan Barbier", "2015/09/21 09:00", "Commencée", "Alice Leroux", "34972678785379326648", ""],
  ["20096", "Romane Fleury", "2015/09/27 14:30", "Commencée", "Anaïs Nguyen", "16613463045211539655", ""],
  ["20492", "Rayan Gerard", "2015/10/03 11:24", "Commencée", "Benjamin Leroux", "18335021941942264946", "DL_8331"],
  ["20671", "Zoe Schneider", "2015/10/03 14:55", "Commencée", "Mathis Morel", "16662737362162753042", ""],
  ["19200", "Mattéo Michel", "2015/10/05 08:50", "Commencée", "Hugo Denis", "68681213360251449528", "AF_0347"],
  ["20684", "Sacha Bernard", "2015/10/05 09:40", "Commencée", "Sarah Roger", "15328114147366229300", ""],
  ["20352", "Justine Legrand", "2015/10/05 09:45", "Commencée", "Tom Morin", "18153241165772459588", ""],
  ["20287", "Camille Moreau", "2015/10/05 09:50", "Commencée", "Océane Michel", "36561239665062767052", ""],
  ["20558", "Lilou Schmitt", "2015/10/05 09:50", "Commencée", "Alexandre Girard", "08428573312446806469", "BM_1881"],
  ["20233", "Maëlle Carpentier", "2015/10/05 10:00", "En attente", "Tom Dupont", "24043920798714595453", ""],
];

function RideRow({ index, ride }: { index: number; ride?: (typeof RIDES)[number] }) {
  const tone = index === 4 ? "bg-[#b3b3b3]" : index === 9 ? "bg-[#c5ebff]" : "bg-[#5c9bff]";
  const idTone = index === 4 || index === 9 ? "text-[#2f76b0]" : "text-[#2f72ba]";
  const text = index === 4 ? "text-[#404040]" : index === 9 ? "text-[#3a4146]" : "text-[#2b3f5c]";
  return (
    <div className={"flex h-[50px] shrink-0 text-[9px] leading-[13px] " + text}>
      {COLS.map((w, i) => (
        <div
          key={i}
          className={
            "overflow-hidden pt-[4px] pl-[5px] whitespace-nowrap " + w + " " + (i < 7 ? "border-r border-[#d4d4d4] " : "") + (i === 0 && index !== 4 ? "bg-white" : tone)
          }
        >
          {ride && i === 1 && (
            <span>
              <span className={idTone}>{ride[0]}</span>...
            </span>
          )}
          {ride && i > 1 && ride[i - 1]}
        </div>
      ))}
    </div>
  );
}

function RidesPanel() {
  return (
    <section className="flex h-[615px] w-[783px] flex-col">
      <PanelHeader title="Rides" tone="bg-[#4c4f53]" icon={<Icon d={P.ticket} size={15} />} />
      <div className="flex flex-1 flex-col border-b-[3px] border-l border-[#cccccc] bg-white pl-px">
        <div className="flex h-8">
          <div className="flex h-[31px] w-[37px] items-center justify-center bg-[#dddddd] pt-px text-[#222] shadow-[inset_0_-2px_0_rgba(0,0,0,0.05)]">
            <Icon d={P.search} size={13} />
          </div>
          <div className="mt-[2px] ml-[3px] h-6 w-[179px] border border-[#a9a9a9] pl-[2px] text-[13px] leading-[22px] text-[#a9a9a9]">Search</div>
        </div>
        <div className="flex h-6 border-y border-l border-[#d4d4d4] bg-gradient-to-b from-white to-[#eeeeee] text-[9px] leading-[22px] font-bold text-[#333]">
          {HEADS.map((h, i) => (
            <div
              key={h + i}
              className={"flex justify-between pl-[5px] " + (i === 0 ? "w-[29px] border-r border-[#d4d4d4]" : i < 7 ? COLS[i] + " border-r border-[#d4d4d4]" : "w-[81px]")}
            >
              {h}
              {i > 1 && (
                <svg width="6" height="4" viewBox="0 0 6 4" className={i < 7 ? "mt-[6px] mr-[7px]" : "mt-[6px]"}>
                  <path d="M.5.5L3 3L5.500.5" fill="none" stroke="#444" />
                </svg>
              )}
            </div>
          ))}
        </div>
        <div className="mt-px flex h-[506px]">
          <div className="flex w-[764px] flex-col overflow-hidden">
            {RIDES.map((r, i) => (
              <RideRow key={r[0]} index={i} ride={r} />
            ))}
            <RideRow index={10} />
          </div>
          <div className="flex flex-1 flex-col items-start bg-[#f0f0f0] pl-[2px]">
            <svg width="12" height="14" viewBox="0 0 12 14">
              <path d="M2 9h7L5.500 5z" fill="#a3a3a3" />
            </svg>
            <div className="h-[30px] w-full bg-[#c1c1c1]" />
            <svg width="12" height="14" viewBox="0 0 12 14" className="mt-auto">
              <path d="M2 4h7L5.500 8z" fill="#505050" />
            </svg>
          </div>
        </div>
        <div className="flex h-[15px] w-[764px] items-center justify-between bg-[#f0f0f0] px-[5px]">
          <svg width="4" height="7" viewBox="0 0 4 7">
            <path d="M4 0v7L0 3.500z" fill="#a3a3a3" />
          </svg>
          <svg width="4" height="7" viewBox="0 0 4 7">
            <path d="M0 0v7L4 3.500z" fill="#a3a3a3" />
          </svg>
        </div>
      </div>
    </section>
  );
}

/* ---------- ride information ---------- */

interface InfoRow {
  label: string;
  h: string;
  value?: React.ReactNode;
}

function InfoTable({ title, underline, width, labelWidth, rows }: { title: string; underline?: boolean; width: string; labelWidth: string; rows: InfoRow[] }) {
  return (
    <div className={"shrink-0 border border-[#dddddd] bg-white text-[10px] leading-[14px] text-[#333] " + width}>
      <div className={"h-[30px] bg-[#404040] pt-[8px] pl-[4px] font-bold text-white " + (underline ? "underline" : "")}>{title}</div>
      {rows.map((r, i) => (
        <div key={r.label} className={"flex border-t border-[#dddddd] " + r.h + (i % 2 ? " bg-[#f9f9f9]" : "")}>
          <div className={"shrink-0 border-r border-[#dddddd] pt-[8px] pr-[4px] pl-[4px] font-bold " + labelWidth}>{r.label}</div>
          <div className="pt-[8px] pl-[4px] whitespace-nowrap">{r.value}</div>
        </div>
      ))}
    </div>
  );
}

function InfoPanel() {
  return (
    <section className="mt-[30px] flex w-[783px] flex-col">
      <PanelHeader title="Ride information" icon={<Icon d={P.ticket} size={15} />} />
      <div className="flex h-[260px] border-t border-l border-t-[#dddddd] border-l-[#cccccc] bg-[#fafafa]">
        <div className="w-[301px] border-r border-[#dddddd] pt-2 pl-[4px]">
          <InfoTable
            title="Ride"
            underline
            width="w-[292px]"
            labelWidth="w-[90px]"
            rows={[
              { label: "Pick up", h: "h-[31px]", value: "Aéroport Charles de Gaulle Terminal 2E" },
              { label: "Drop off", h: "h-[31px]", value: "180 Rue de Grenelle, Paris, France" },
              { label: "Intermediate stops", h: "h-[45px]" },
              { label: "Date", h: "h-[31px]", value: "2015/10/05 08:50" },
              { label: "Price", h: "h-[31px]", value: "49.1" },
            ]}
          />
        </div>
        <div className="w-[199px] border-r border-[#dddddd] pt-2 pl-[4px]">
          <InfoTable
            title="customer"
            width="w-[190px]"
            labelWidth="w-[65px]"
            rows={[
              { label: "Last and first name", h: "h-[45px]", value: <span className="text-[#337ab7]">Julien Rey</span> },
              { label: "Phone", h: "h-[40px]", value: "52443856176173702830" },
              {
                label: "Passenger",
                h: "h-[63px]",
                value: (
                  <>
                    <p>Mattéo Michel</p>
                    <p className="mt-[9px]">13592357417061727504</p>
                  </>
                ),
              },
            ]}
          />
          <div className="mt-[5px] h-px w-[190px] bg-[#eeeeee]" />
          <div className="mt-[5px] h-[30px] w-[190px] border border-[#dddddd] bg-[#404040]" />
        </div>
        <div className="pt-2 pl-[4px]">
          <InfoTable
            title="Driver"
            width="w-[273px]"
            labelWidth="w-[87px]"
            rows={[
              { label: "Last and first name", h: "h-[45px]", value: <span className="text-[#337ab7]">Hugo Denis</span> },
              { label: "Phone", h: "h-[43px]", value: <span className="text-[12px] leading-[17px]">68681213360251449528</span> },
              { label: "Status", h: "h-[31px]" },
              { label: "Last trace", h: "h-[31px]" },
              { label: "Car", h: "h-[31px]", value: "BMW serie 3.20 GT pack executive" },
            ]}
          />
        </div>
      </div>
    </section>
  );
}

export default function App() {
  return (
    <div className="h-[900px] w-[1668px] overflow-hidden bg-white pt-1 pl-[10px] font-['Open_Sans','Noto_Sans',sans-serif]">
      <div className="flex h-[891px] w-[1647px] overflow-hidden bg-[#efefef]">
        <Sidebar />
        <main className="flex shrink-0 pt-[3px] pl-[14px]">
          <MapPanel />
          <div className="ml-[26px] flex flex-col">
            <RidesPanel />
            <InfoPanel />
          </div>
        </main>
      </div>
    </div>
  );
}
